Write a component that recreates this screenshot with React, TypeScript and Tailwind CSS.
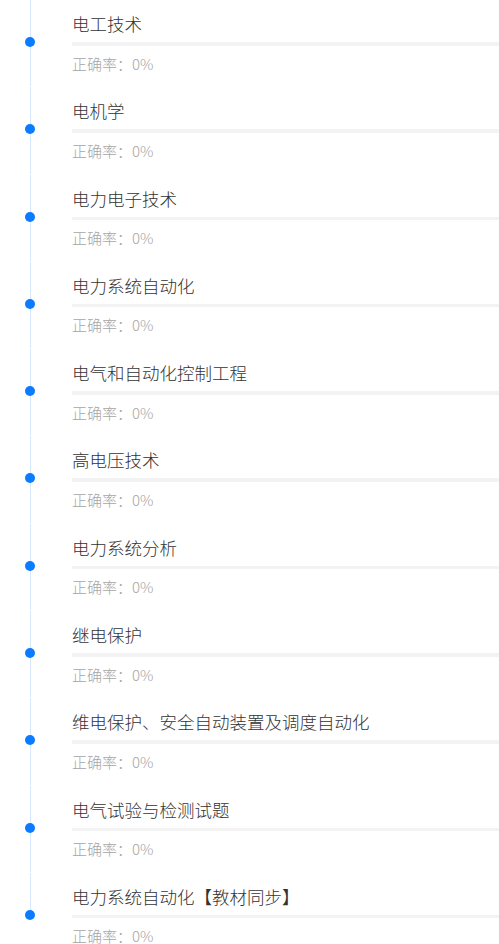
import React from "react";

const chapters = [
  "电工技术",
  "电机学",
  "电力电子技术",
  "电力系统自动化",
  "电气和自动化控制工程",
  "高电压技术",
  "电力系统分析",
  "继电保护",
  "维电保护、安全自动装置及调度自动化",
  "电气试验与检测试题",
  "电力系统自动化【教材同步】",
];

function ChapterItem({ title, last }: { title: string; last: boolean }) {
  return (
    <div className="flex">
      <div className="relative w-[72px] shrink-0">
        <div
          className={
            last
              ? "absolute left-[30px] top-0 h-[42px] w-px bg-[#d8e8fc]"
              : "absolute left-[30px] top-0 bottom-[1px] w-px bg-[#d8e8fc]"
          }
        />
        <div className="absolute left-[25px] top-[37px] h-[10px] w-[10px] rounded-full bg-[#0b7bff]" />
      </div>
      <div className="flex-1 pt-[12px] pb-[13.8px]">
        <div className="text-[17.5px] leading-[24px] font-light text-[#333333] whitespace-nowrap">{title}</div>
        <div className="mt-[6px] h-[3.5px] bg-[#f3f3f3]" />
        <div className="mt-[8px] text-[15px] leading-[20px] font-light text-[#a6a6a6]">正确率：0%</div>
      </div>
    </div>
  );
}

export default function App() {
  return (
    <div
      className="min-h-screen bg-white"
      style={{ fontFamily: '"Noto Sans CJK SC", "Noto Sans", sans-serif' }}
    >
      {chapters.map((t, i) => (
        <ChapterItem key={t} title={t} last={i === chapters.length - 1} />
      ))}
    </div>
  );
}
